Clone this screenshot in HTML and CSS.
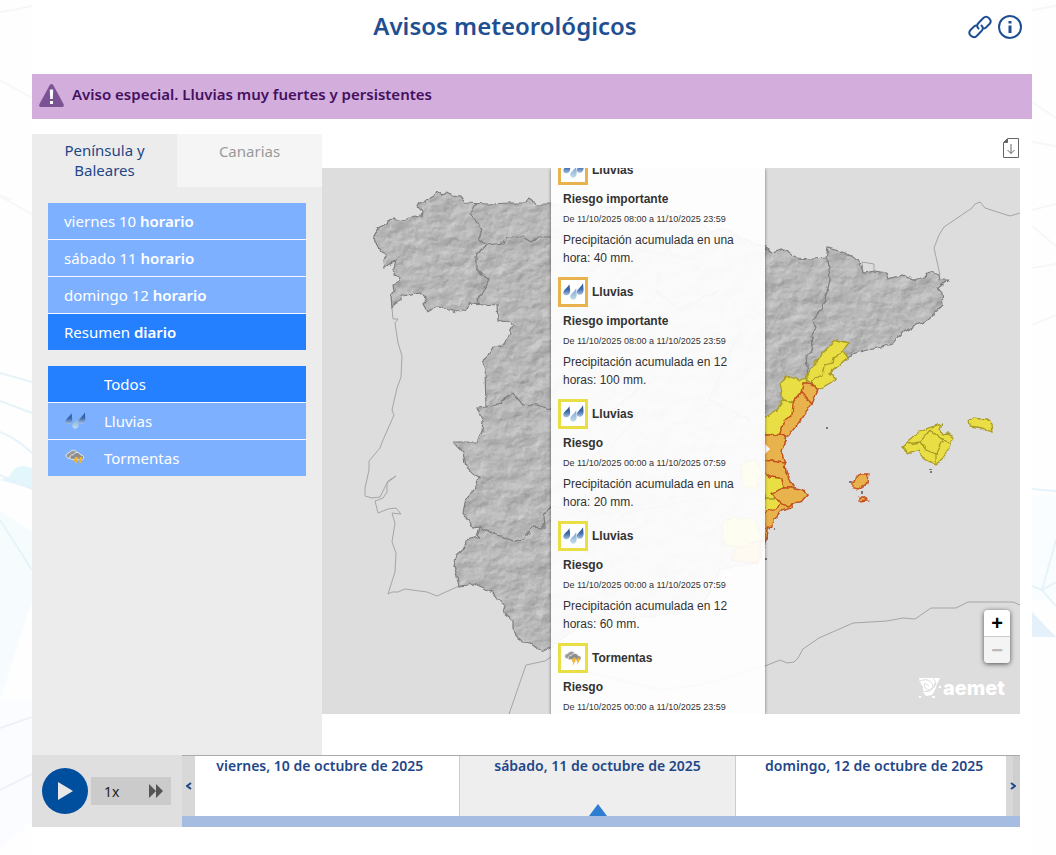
FILE: index.html
```html
<!doctype html>
<html lang="es">
  <head>
    <meta charset="utf-8">
    <title>Avisos meteorológicos</title>
    <link rel="stylesheet" href="styles.css">
  </head>
  <body>

    <!-- shared icons -->
    <svg class="defs" width="0" height="0" aria-hidden="true">
      <defs>
        <linearGradient id="drop-dark" x1="0" y1="0" x2="0" y2="1">
          <stop offset="0" stop-color="#24508f"/>
          <stop offset="0.5" stop-color="#3f6cad"/>
          <stop offset="1" stop-color="#a9c0e4"/>
        </linearGradient>
        <linearGradient id="drop-light" x1="0" y1="0" x2="0" y2="1">
          <stop offset="0" stop-color="#7ba3d6"/>
          <stop offset="1" stop-color="#c3dde6"/>
        </linearGradient>
      </defs>
      <symbol id="rain" viewBox="0 0 24 20">
        <path d="M8 1.500C8.500 6 9.500 8 8.500 11C7 14.500 2 14.500 1.500 11C1 8 5.500 6 8 1.500Z" fill="url(#drop-dark)"/>
        <path d="M15.500 6C15.500 10.500 16.800 13 15.500 16C14 19.500 9.500 19 9 15.500C8.500 12.500 12.500 11 15.500 6Z" fill="url(#drop-light)"/>
        <path d="M23 0.500C23 5 24.200 7.500 23 10.500C21.500 14 16.800 13.800 16.200 10.500C16 7.500 20 5.500 23 0.500Z" fill="url(#drop-dark)"/>
      </symbol>
      <symbol id="storm" viewBox="0 0 24 20">
        <path d="M4 10C1 9 1.500 4 6 4C7.500 0.500 13 0.500 14 4L8 11Z" fill="#999" stroke="#eee" stroke-width="1"/>
        <path d="M8 11.500C5 11 6 6 10 6.500C11.500 3 17 3 18 6.500C22 6.500 23 11 20 12Z" fill="#8d8d8d" stroke="#eee" stroke-width="1"/>
        <path d="M12 9H16L14 12.500H15.500L11.500 19L12.500 14H10.500ZM17.500 9H20.500L19 12.500H20L16.500 18L17.500 13.500H16Z" fill="#f2b52c"/>
      </symbol>
    </svg>

    <!-- page backdrop -->
    <svg class="backdrop" viewBox="0 0 1056 855" preserveAspectRatio="none" aria-hidden="true">
      <g fill="none" stroke="#f6f7f9" stroke-width="2">
        <path d="M0 12Q16 10 32 6M0 80L32 98M0 195Q6 200 12 198M0 196L32 214M1032 10L1056 6M1032 102L1056 118M1032 142L1056 146M1032 210L1056 204M1032 226L1056 246M1032 268L1056 264M1032 325L1056 315"/>
      </g>
      <path d="M10 476Q14 465 24 466L32 468V489L0 480Z" fill="#e3f6fb"/>
      <path d="M0 510L32 532V600L0 700Z" fill="#f6fcfe"/>
      <path d="M0 700H32V820L0 850Z" fill="#fbfcff"/>
      <path d="M1032 495H1056V600H1032Z" fill="#fafdff"/>
      <path d="M1032 612L1056 637H1032Z" fill="#e4f1fa"/>
      <g fill="none" stroke="#e6f3f9" stroke-width="2">
        <path d="M0 373L32 382M0 401L32 413M0 432Q16 438 32 453M0 475L32 489M0 520L32 570M1032 489L1056 491M1032 586L1042 590L1056 582M1056 540L1042 590L1056 606"/>
      </g>
      <path d="M0 728L32 717M0 790L32 774" fill="none" stroke="#edf2fa" stroke-width="2"/>
    </svg>

    <main class="page">
      <header class="page-header">
        <h1>Avisos meteorológicos</h1>
        <a href="#enlace" class="header-icon" aria-label="Enlace">
          <svg width="24" height="24" viewBox="0 0 24 24" fill="none" stroke="#1f4f93" stroke-width="2" stroke-linecap="round">
            <path d="M10.500 13.500C8.800 11.800 9 9.600 10.300 8.200L15.300 3C19 -0.500 25 5 21.500 9L17.500 13L16 13.500"/>
            <path d="M13.500 10.500C15.200 12.200 15 14.400 13.700 15.800L8.700 21C5 24.500 -1 19 2.500 15L6.500 11L8 10.500"/>
          </svg>
        </a>
        <a href="#info" class="header-icon" aria-label="Información">
          <svg width="24" height="24" viewBox="0 0 24 24">
            <circle cx="12" cy="12" r="11" fill="none" stroke="#1f4f93" stroke-width="2"/>
            <path d="M10.500 6H13.500V8.500H10.500ZM10.500 10.500H13.500V18H10.500Z" fill="#1f4f93"/>
          </svg>
        </a>
      </header>

      <section class="special-warning">
        <svg width="25" height="23" viewBox="0 0 25 23" aria-hidden="true">
          <path d="M10.800 1Q12.500 -1 14.200 1L24.500 20Q25.500 22.800 23 23H2Q-0.500 22.800 0.500 20Z" fill="#7b5294"/>
          <path d="M10.800 5.500H14.200L13.800 15H11.200ZM11 17H14V20H11Z" fill="#fff"/>
        </svg>
        <strong>Aviso especial. Lluvias muy fuertes y persistentes</strong>
      </section>

      <div class="viewer">
        <aside class="sidebar">
          <nav class="tabs">
            <button type="button" class="tab active">Península y Baleares</button>
            <button type="button" class="tab">Canarias</button>
          </nav>
          <div class="menu">
            <button type="button">viernes 10 <b>horario</b></button>
            <button type="button">sábado 11 <b>horario</b></button>
            <button type="button">domingo 12 <b>horario</b></button>
            <button type="button" class="selected">Resumen <b>diario</b></button>
          </div>
          <div class="menu phenomena">
            <button type="button" class="selected"><span class="icon"></span>Todos</button>
            <button type="button"><span class="icon"><svg width="22" height="18"><use href="#rain"/></svg></span>Lluvias</button>
            <button type="button"><span class="icon"><svg width="22" height="18"><use href="#storm"/></svg></span>Tormentas</button>
          </div>
        </aside>

        <section class="map-column">
          <div class="map-tools">
            <button type="button" class="download" aria-label="Descargar">
              <svg width="16" height="20" viewBox="0 0 16 20" fill="none" stroke="#666">
                <path d="M4.500 0.500H15.500V19.500H0.500V4.500Z"/>
                <path d="M1 4.500L4.500 1V4.500Z" fill="#555"/>
                <path d="M8 6V15.500M4.500 12L8 15.500L11.500 12"/>
              </svg>
            </button>
          </div>

          <div class="map">
            <svg class="map-canvas" viewBox="322 168 698 546" role="img" aria-label="Mapa de avisos">
              <defs>
                <filter id="relief" color-interpolation-filters="sRGB" x="0" y="0" width="1" height="1">
                  <feTurbulence type="fractalNoise" baseFrequency="0.05 0.07" numOctaves="4" seed="8"/>
                  <feDiffuseLighting surfaceScale="1" lighting-color="#e9e9e9" result="light">
                    <feDistantLight azimuth="225" elevation="52"/>
                  </feDiffuseLighting>
                  <feComposite in="light" in2="SourceAlpha" operator="in"/>
                </filter>
                <filter id="rough" x="0" y="0" width="1" height="1">
                  <feTurbulence type="fractalNoise" baseFrequency="0.14" numOctaves="2" seed="3" result="noise"/>
                  <feDisplacementMap in="SourceGraphic" in2="noise" scale="5" xChannelSelector="R" yChannelSelector="G"/>
                </filter>
                <path id="land" d="M550 204L537 204L529 198L525 203L512 203L487 204L465 203L460 196L453 195L446 192L442 195L437 191L435 195L428 199L423 203L417 206L422 211L421 216L415 215L407 219L396 220L393 217L388 223L378 228L373 237L374 243L380 249L382 253L387 255L383 260L384 268L392 263L396 260L394 268L393 275L400 277L398 283L393 285L394 290L391 295L392 308L403 297L420 293L427 297L423 305L427 312L437 307L445 309L457 312L467 309L470 303L483 304L497 305L498 320L507 322L513 326L508 338L503 345L493 347L487 357L482 361L485 370L486 407L477 408L483 422L482 430L477 442L453 442L463 453L466 467L472 474L479 478L475 489L466 498L463 513L473 528L480 527L477 537L466 540L465 548L457 555L454 565L457 577L459 586L475 584L493 592L505 607L503 612L513 620L513 630L522 642L530 643L542 652L550 648L580 625L640 618L690 610L705 600L720 570L733 567L758 563L766 540L767 528L773 527L774 519L780 512L793 507L793 503L801 502L807 495L803 490L795 488L786 473L785 463L781 452L787 437L797 425L803 417L812 403L818 390L823 387L836 379L829 374L847 358L860 352L893 344L903 332L927 320L943 305L942 293L938 288L942 285L948 280L940 280L939 275L930 272L925 277L913 280L902 275L888 279L886 273L875 271L863 273L860 262L850 256L842 252L828 248L826 258L812 259L797 258L788 252L782 249L772 252L766 248L740 238L725 228L712 232L690 215L650 205L600 207Z"/>
              </defs>

              <!-- neighbouring coasts -->
              <g fill="none" stroke="#a5a5a5" stroke-width="1">
                <path d="M392 308L393 319L398 319L395 323L398 343L402 356L401 377L397 388L392 410L394 415L383 440L380 448L369 461L369 470L365 488L365 496L372 498L380 497L388 481L396 476L387 483L387 492L383 498L375 501L378 513L388 509L396 508L401 514L392 513L395 523L392 542L396 553L395 572L388 594L392 592L398 592L405 589L427 592L437 596L459 586"/>
                <path d="M509 714L526 665L545 661L551 657L580 670L660 690L700 685L765 666L780 660L787 663L794 662L798 658L803 649L819 638L853 623L887 621L903 618L915 619L931 608L956 608L968 602L1013 602L1020 605"/>
                <path d="M940 275L934 248L939 235L944 227L972 208L975 204L980 202L985 208L1010 216L1020 213M863 273L862 262L874 264L874 271"/>
              </g>

              <g filter="url(#rough)">
                <use href="#land" filter="url(#relief)"/>
                <use href="#land" fill="none" stroke="#7d7d7d" stroke-width="1.200"/>
                <g fill="none" stroke="#7d7d7d" stroke-width="1.200">
                  <path d="M477 204L470 213L482 230L479 238L486 245L476 257L476 269L489 280L483 293L477 298L478 303"/>
                  <path d="M486 245L503 243L507 237L523 237L531 242L538 237L560 237L600 232L640 250L700 260"/>
                  <path d="M486 407L497 405L513 393L522 404L537 405L547 408L600 420L650 380"/>
                  <path d="M480 527L490 533L503 537L515 541L525 538L533 527L544 528L543 515L551 507L620 515L690 500"/>
                  <path d="M828 258L830 280L823 308L812 320L816 328L812 335L813 348L806 357L808 375"/>
                  <path d="M660 270L655 290L680 310L720 290M640 410L610 450M740 330L710 400L750 420"/>
                </g>

                <g fill="#e9df45" stroke="#a89a25" stroke-width="1.300">
                  <path d="M805 378L816 362L828 347L836 340L849 343L843 352L847 358L829 374L836 379L830 383L818 390L812 383Z"/>
                  <path d="M812 383L815 378L823 375L825 365L833 363L834 358L843 352" fill="none"/>
                  <path d="M787 376L800 380L807 378L808 383L803 383L801 393L793 402L783 400L782 393L780 383Z"/>
                  <path d="M783 400L794 402L792 415L784 420L781 433L776 436L770 434L764 434L764 418L777 410Z"/>
                  <path d="M764 473L770 477L780 478L783 487L772 493L780 503L777 510L764 513Z"/>
                  <path d="M772 493L777 499L764 499" fill="none"/>
                  <path d="M742 465L755 460L762 475L755 490L742 485ZM722 522L735 518L755 520L762 540L740 548L724 544Z"/>
                  <path d="M902 447L917 434L930 427L942 424L940 430L943 435L948 434L954 438L950 445L944 458L936 465L923 458L919 450L912 453L909 453Z"/>
                  <path d="M908 444L920 442L930 430M920 442L926 450L936 454L943 440L930 430M936 454L936 464M943 440L950 444" fill="none"/>
                  <path d="M969 420L973 417L987 419L992 424L993 433L982 428L970 426Z"/>
                </g>
                <g fill="#e8b24d" stroke="#c4501c" stroke-width="1.300">
                  <path d="M808 383L803 383L801 393L812 404L818 390L812 384Z"/>
                  <path d="M801 393L793 403L792 415L784 420L781 433L787 437L797 425L803 417L812 404Z"/>
                  <path d="M764 434L770 434L776 436L780 433L787 437L781 452L785 463L764 460Z"/>
                  <path d="M764 460L785 463L786 473L795 488L783 488L781 478L770 477L764 473Z"/>
                  <path d="M772 493L783 488L795 488L803 490L807 495L801 502L793 503L788 506L780 503Z"/>
                  <path d="M764 513L777 509L780 503L788 506L793 503L793 507L780 512L774 519L773 527L767 528L766 540L764 541Z"/>
                  <path d="M730 560L735 550L762 540L758 563Z"/>
                  <path d="M852 482L860 474L869 474L868 483L858 489L852 488ZM859 497L863 497L868 500L859 501Z"/>
                </g>
              </g>
              <path d="M826 427h2v2h-2zM930 471h2v2h-2zM929 469h3v1h-3zM849 481h3v2h-3zM861 491h2v3h-2zM774 528h1v2h-1zM765 558h2v2h-2z" fill="#777"/>
            </svg>

            <div class="map-logo">
              <svg width="22" height="20" viewBox="0 0 22 20" aria-hidden="true">
                <path d="M0 0H21L18 6L16 12L13 17L7 18L4 14L4 9L1 4Z" fill="#fff"/>
                <path d="M1 3Q8 0 12 4T12 11T6 9T7 6T10 8M4 13Q13 16 17 5M14 0Q18 3 15 9" fill="none" stroke="#ccc" stroke-width="0.700"/>
                <path d="M0 18h2v2h-2zM13 18h3v2h-3zM20 8h2v2h-2z" fill="#fff"/>
              </svg>
              <span>aemet</span>
            </div>

            <div class="zoom-control">
              <button type="button" aria-label="Acercar">+</button>
              <button type="button" aria-label="Alejar" disabled>−</button>
            </div>

            <div class="popup-tip"></div>
            <div class="popup">
              <div class="popup-scroll">
                <article class="alert orange">
                  <h2><span class="level"><svg width="22" height="20"><use href="#rain"/></svg></span>Lluvias</h2>
                  <h3>Riesgo importante</h3>
                  <time>De 11/10/2025 08:00 a 11/10/2025 23:59</time>
                  <p>Precipitación acumulada en una hora: 40 mm.</p>
                </article>
                <article class="alert orange">
                  <h2><span class="level"><svg width="22" height="20"><use href="#rain"/></svg></span>Lluvias</h2>
                  <h3>Riesgo importante</h3>
                  <time>De 11/10/2025 08:00 a 11/10/2025 23:59</time>
                  <p>Precipitación acumulada en 12 horas: 100 mm.</p>
                </article>
                <article class="alert yellow">
                  <h2><span class="level"><svg width="22" height="20"><use href="#rain"/></svg></span>Lluvias</h2>
                  <h3>Riesgo</h3>
                  <time>De 11/10/2025 00:00 a 11/10/2025 07:59</time>
                  <p>Precipitación acumulada en una hora: 20 mm.</p>
                </article>
                <article class="alert yellow">
                  <h2><span class="level"><svg width="22" height="20"><use href="#rain"/></svg></span>Lluvias</h2>
                  <h3>Riesgo</h3>
                  <time>De 11/10/2025 00:00 a 11/10/2025 07:59</time>
                  <p>Precipitación acumulada en 12 horas: 60 mm.</p>
                </article>
                <article class="alert yellow">
                  <h2><span class="level"><svg width="20" height="17"><use href="#storm"/></svg></span>Tormentas</h2>
                  <h3>Riesgo</h3>
                  <time>De 11/10/2025 00:00 a 11/10/2025 23:59</time>
                </article>
              </div>
            </div>
          </div>
        </section>
      </div>

      <footer class="player">
        <div class="player-controls">
          <button type="button" class="play" aria-label="Reproducir">
            <svg width="16" height="18" viewBox="0 0 16 18"><path d="M1 0L16 9L1 18Z" fill="#e8e8e8"/></svg>
          </button>
          <button type="button" class="speed">
            <span>1x</span>
            <svg width="16" height="14" viewBox="0 0 16 14"><path d="M1 0L8 7L1 14ZM8 0L15 7L8 14Z" fill="#555"/></svg>
          </button>
        </div>
        <div class="timeline">
          <div class="days">
            <button type="button" class="arrow" aria-label="Anterior">
              <svg width="6" height="8" viewBox="0 0 6 8"><path d="M5 1L1 4L5 7" fill="none" stroke="#1f4788" stroke-width="2"/></svg>
            </button>
            <button type="button" class="day first">viernes, 10 de octubre de 2025</button>
            <button type="button" class="day current">sábado, 11 de octubre de 2025</button>
            <button type="button" class="day last">domingo, 12 de octubre de 2025</button>
            <button type="button" class="arrow next" aria-label="Siguiente">
              <svg width="6" height="8" viewBox="0 0 6 8"><path d="M1 1L5 4L1 7" fill="none" stroke="#1f4788" stroke-width="2"/></svg>
            </button>
          </div>
          <div class="progress"></div>
        </div>
      </footer>
    </main>

  </body>
</html>
```
FILE: styles.css
```css
* {
  box-sizing: border-box;
}

body {
  margin: 0;
  background: #fefefe;
  color: #333;
  font-family: "Noto Sans", sans-serif;
  font-size: 15px;
}

button {
  margin: 0;
  padding: 0;
  border: 0;
  font: inherit;
  color: inherit;
  cursor: pointer;
}

h1, h2, h3, p {
  margin: 0;
}

.defs,
.backdrop {
  position: absolute;
}

.backdrop {
  inset: 0;
  width: 100%;
  height: 100%;
  z-index: -1;
}

.page {
  margin: 0 24px 0 32px;
  padding-bottom: 28px;
  background: #fff;
}

/* header */
.page-header {
  display: flex;
  align-items: center;
  height: 54px;
  padding: 0 10px 0 16px;
  gap: 6px;
}

.page-header h1 {
  flex: 1;
  padding-bottom: 2px;
  color: #1f4f93;
  font-size: 24px;
  font-weight: 600;
  line-height: 36px;
  text-align: center;
}

.header-icon {
  display: block;
  height: 24px;
}

.special-warning {
  display: flex;
  align-items: center;
  gap: 8px;
  height: 45px;
  margin: 20px 0 15px;
  padding: 0 7px 3px;
  background: #d3addb;
  color: #431060;
}

.special-warning strong {
  padding-bottom: 2px;
  font-weight: 600;
}

/* sidebar */
.viewer {
  display: flex;
  padding-right: 12px;
}

.sidebar {
  flex: 0 0 290px;
  background: #ececec;
}

.tabs {
  display: flex;
  align-items: flex-start;
  height: 69px;
}

.tab {
  flex: 1;
  height: 53px;
  padding: 6px 24px 8px;
  background: #ececec;
  color: #1f4788;
  line-height: 20px;
}

.tab:not(.active) {
  display: flex;
  justify-content: center;
  padding-top: 7px;
  background: #f5f5f5;
  color: #999;
}

.menu {
  display: flex;
  flex-direction: column;
  gap: 1px;
  margin: 0 16px 16px;
  background: #f5f8ff;
}

.menu button {
  height: 36px;
  padding: 0 16px;
  background: #7db1ff;
  color: #fff;
  text-align: left;
}

.menu button.selected {
  background: #2580ff;
}

.menu b {
  font-weight: 600;
}

.phenomena button {
  display: flex;
  align-items: center;
}

.phenomena .icon {
  display: flex;
  width: 40px;
}

/* map */
.map-column {
  flex: 1;
  min-width: 0;
  padding-bottom: 41px;
}

.map-tools {
  display: flex;
  align-items: center;
  justify-content: flex-end;
  height: 34px;
  padding: 0 1px 6px;
}

.download {
  height: 20px;
  background: none;
}

.map {
  position: relative;
  overflow: hidden;
  background: #ddd;
}

.map-canvas {
  display: block;
  width: 100%;
}

.map-logo {
  position: absolute;
  right: 15px;
  bottom: 14px;
  display: flex;
  align-items: center;
  gap: 2px;
  color: #fff;
  font-family: Inter, sans-serif;
  font-size: 20px;
  font-weight: 800;
  line-height: 24px;
}

.zoom-control {
  position: absolute;
  right: 10px;
  bottom: 51px;
  width: 26px;
  overflow: hidden;
  border-radius: 4px;
  box-shadow: 0 1px 5px rgba(0, 0, 0, 0.65);
}

.zoom-control button {
  display: block;
  width: 26px;
  height: 26px;
  background: #fff;
  color: #000;
  font: bold 20px/24px "Liberation Sans", sans-serif;
}

.zoom-control button:disabled {
  height: 27px;
  border-top: 1px solid #ccc;
  background: #f4f4f4;
  color: #bbb;
}

/* alert popup */
.popup {
  position: absolute;
  top: 0;
  bottom: 0;
  left: calc(50% - 120px);
  width: 214px;
  overflow: hidden;
  background: rgba(255, 255, 255, 0.93);
  box-shadow: 0 1px 3px rgba(0, 0, 0, 0.5);
  font: 12px/18px "Liberation Sans", Arial, sans-serif;
}

.popup-tip {
  position: absolute;
  top: 276px;
  left: calc(50% + 94px);
  border: 5px solid transparent;
  border-left-color: #fff;
}

.popup-scroll {
  margin-top: -13px;
  padding: 0 24px 0 12px;
}

.alert {
  margin-bottom: 10px;
}

.alert h2 {
  display: flex;
  align-items: center;
  gap: 4px;
  margin: 0 0 5px -5px;
  font-size: 12px;
}

.alert h3 {
  margin-bottom: 2px;
  font-size: 12px;
}

.alert time {
  display: block;
  margin-bottom: 3px;
  font-size: 9px;
  white-space: nowrap;
}

.level {
  display: flex;
  align-items: center;
  justify-content: center;
  width: 30px;
  height: 30px;
  border: 3px solid #e9df45;
  background: #fff;
}

.orange .level {
  border-color: #e8b24d;
}

/* timeline */
.player {
  display: flex;
  padding-right: 12px;
}

.player-controls {
  display: flex;
  align-items: center;
  gap: 3px;
  flex: 0 0 150px;
  height: 72px;
  padding-left: 10px;
  background: #dfdfdf;
}

.play {
  display: flex;
  align-items: center;
  justify-content: center;
  width: 46px;
  height: 46px;
  border-radius: 50%;
  background: #004f9f;
}

.speed {
  display: flex;
  align-items: center;
  justify-content: space-between;
  width: 80px;
  height: 28px;
  padding: 0 7px 0 13px;
  background: #cbcbcb;
  color: #222;
  font-size: 14px;
}

.timeline {
  display: flex;
  flex: 1;
  flex-direction: column;
}

.days {
  display: flex;
  flex: 1;
  border-top: 1px solid #aaa;
}

.arrow {
  display: flex;
  align-items: center;
  justify-content: center;
  width: 13px;
  background: #d8d8d8;
}

.arrow.next {
  width: 14px;
  background: linear-gradient(to right, #d8d8d8 50%, #cfcfcf 50%);
}

.day {
  position: relative;
  display: flex;
  justify-content: center;
  background: #fff;
  color: #1f4788;
  font-size: 14px;
  font-weight: 600;
  line-height: 20px;
  white-space: nowrap;
}

.day.first {
  flex: 250;
  padding-right: 14px;
}

.day.last {
  flex: 264;
  padding-left: 6px;
}

.day.current {
  flex: 276;
  border: solid #ccc;
  border-width: 0 1px;
  background: #eee;
}

.day.current::after {
  content: "";
  position: absolute;
  bottom: 0;
  left: 50%;
  margin-left: -9px;
  border: solid transparent;
  border-width: 0 9px 12px;
  border-bottom-color: #2d7dd2;
}

.progress {
  height: 11px;
  background: #a6bce0;
}
```
